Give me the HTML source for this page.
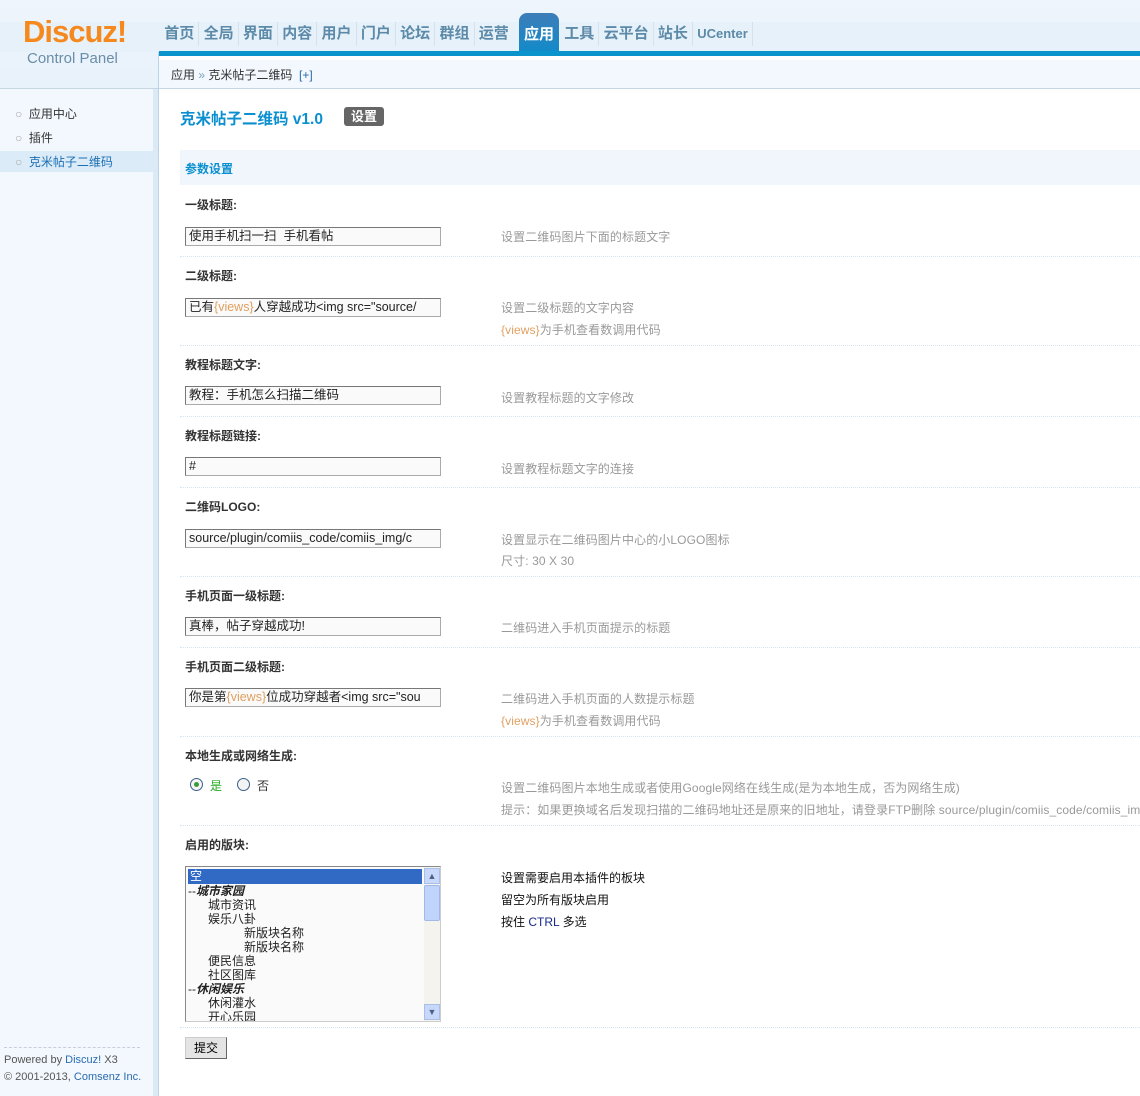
<!DOCTYPE html>
<html><head><meta charset="utf-8"><style>
*{margin:0;padding:0;box-sizing:border-box}
body{width:1140px;height:1096px;position:relative;overflow:hidden;background:#fff;font:12px "Liberation Sans","Noto Sans CJK SC",sans-serif;color:#333}
.a{position:absolute;white-space:nowrap}
#hd{position:absolute;left:0;top:0;width:1140px;height:88px;background:linear-gradient(#eef5fc,#e8f2fb)}
#side{position:absolute;left:0;top:89px;width:153px;height:1007px;background:#f2f8fd}
#strip{position:absolute;left:153px;top:89px;width:5px;height:1007px;background:#dceaf7}
#vl{position:absolute;left:158px;top:52px;width:1px;height:1044px;background:#bcd3e6}
.nav{position:absolute;top:22px;height:30px;font-size:15px;font-weight:bold;color:#5c8aa8;line-height:24px}
.nav span{display:inline-block;padding:0 4px 0 4.3px;border-right:1px solid #d4e2ee}
.lab{position:absolute;left:185px;font-weight:bold;color:#333;font-size:12px}
.inp{position:absolute;left:185px;width:256px;height:19px;border:1px solid #aaa;border-top-color:#777;border-left-color:#777;background:#fafafa;font-size:12.5px;line-height:17px;padding-left:3px;overflow:hidden;white-space:nowrap;color:#222}
.d{position:absolute;left:501px;color:#999;font-size:12px;white-space:nowrap;letter-spacing:0.1px}
.hr{position:absolute;left:180px;width:960px;border-top:1px dotted #d8e4ee}
.or{color:#e0a060}
</style></head><body>
<div id="hd"></div>
<div class="a" style="left:0;top:22px;width:1140px;height:30px;background:#e6f1fa"></div>
<div class="a" style="left:23px;top:14px;font:bold 31px 'Liberation Sans',sans-serif;color:#f5891e;letter-spacing:-1px">Discuz!</div>
<div class="a" style="left:27px;top:50px;font-size:15px;color:#6a8ea8">Control Panel</div>
<div class="nav" style="left:160px"><span>首页</span><span>全局</span><span>界面</span><span>内容</span><span>用户</span><span>门户</span><span>论坛</span><span>群组</span><span style="border:none">运营</span></div>
<div class="a" style="left:519px;top:13px;width:40px;height:43px;border-radius:8px 8px 0 0;background:linear-gradient(#3d7db8,#0e8ccb);color:#fff;font-size:15px;font-weight:bold;text-align:center;line-height:44px">应用</div>
<div class="nav" style="left:560px"><span>工具</span><span>云平台</span><span>站长</span><span style="font-size:13px">UCenter</span></div>
<div class="a" style="left:159px;top:51px;width:981px;height:5px;background:#0a94cb"></div>
<div class="a" style="left:159px;top:56px;width:981px;height:4px;background:#fff"></div>
<div class="a" style="left:159px;top:60px;width:981px;height:28px;background:#f2f8fd"></div>
<div class="a" style="left:0;top:88px;width:1140px;height:1px;background:#c6d7e4"></div>
<div class="a" style="left:171px;top:66px;color:#333">应用 <span style="color:#7a9fc0">»</span> 克米帖子二维码 &nbsp;<span style="color:#2a6bb0">[+]</span></div>
<div id="side"></div><div id="strip"></div><div id="vl"></div>
<div class="a" style="left:0;top:151px;width:153px;height:21px;background:#dcebf8"></div>
<div class="a" style="left:15px;top:102px;color:#333;line-height:24px"><span style="color:#aaa">○</span>&nbsp; 应用中心<br><span style="color:#aaa">○</span>&nbsp; 插件<br><span style="color:#aaa">○</span>&nbsp; <span style="color:#1a6fb3">克米帖子二维码</span></div>
<div class="a" style="left:4px;top:1047px;width:136px;border-top:1px dashed #ccd"></div>
<div class="a" style="left:4px;top:1052px;font-size:11px;line-height:17px;color:#555">Powered by <span style="color:#2a6bb0">Discuz!</span> X3<br>© 2001-2013, <span style="color:#2a6bb0">Comsenz Inc.</span></div>

<div class="a" style="left:180px;top:107px;font-size:15.5px;font-weight:bold;color:#0a8fd0">克米帖子二维码 v1.0</div>
<div class="a" style="left:344px;top:107px;width:40px;height:19px;border-radius:3px;background:#666;color:#fff;font-weight:bold;text-align:center;line-height:19px;font-size:13px">设置</div>
<div class="a" style="left:180px;top:150px;width:960px;height:35px;background:#f0f6fc"></div>
<div class="a" style="left:185px;top:160px;font-weight:bold;color:#0a8fd0">参数设置</div>

<div class="lab" style="top:196px">一级标题:</div>
<div class="inp" style="top:227px">使用手机扫一扫&nbsp; 手机看帖</div>
<div class="d" style="top:228px">设置二维码图片下面的标题文字</div>
<div class="hr" style="top:256px"></div>

<div class="lab" style="top:267px">二级标题:</div>
<div class="inp" style="top:298px">已有<span class="or">{views}</span>人穿越成功&lt;img src="source/</div>
<div class="d" style="top:299px">设置二级标题的文字内容</div>
<div class="d" style="top:321px"><span class="or">{views}</span>为手机查看数调用代码</div>
<div class="hr" style="top:345px"></div>

<div class="lab" style="top:356px">教程标题文字:</div>
<div class="inp" style="top:386px">教程：手机怎么扫描二维码</div>
<div class="d" style="top:389px">设置教程标题的文字修改</div>
<div class="hr" style="top:416px"></div>

<div class="lab" style="top:427px">教程标题链接:</div>
<div class="inp" style="top:457px">#</div>
<div class="d" style="top:460px">设置教程标题文字的连接</div>
<div class="hr" style="top:487px"></div>

<div class="lab" style="top:498px">二维码LOGO:</div>
<div class="inp" style="top:529px">source/plugin/comiis_code/comiis_img/c</div>
<div class="d" style="top:531px">设置显示在二维码图片中心的小LOGO图标</div>
<div class="d" style="top:552px">尺寸: 30 X 30</div>
<div class="hr" style="top:576px"></div>

<div class="lab" style="top:587px">手机页面一级标题:</div>
<div class="inp" style="top:617px">真棒，帖子穿越成功!</div>
<div class="d" style="top:619px">二维码进入手机页面提示的标题</div>
<div class="hr" style="top:647px"></div>

<div class="lab" style="top:658px">手机页面二级标题:</div>
<div class="inp" style="top:688px">你是第<span class="or">{views}</span>位成功穿越者&lt;img src="sou</div>
<div class="d" style="top:690px">二维码进入手机页面的人数提示标题</div>
<div class="d" style="top:712px"><span class="or">{views}</span>为手机查看数调用代码</div>
<div class="hr" style="top:736px"></div>

<div class="lab" style="top:747px">本地生成或网络生成:</div>
<div class="a" style="left:190px;top:778px;width:13px;height:13px;border:1px solid #3a5f8c;border-radius:50%;background:#f4f4f4"><div style="position:absolute;left:3px;top:3px;width:5px;height:5px;border-radius:50%;background:#3a9a3a"></div></div>
<div class="a" style="left:210px;top:777px;color:#22aa22">是</div>
<div class="a" style="left:237px;top:778px;width:13px;height:13px;border:1px solid #3a5f8c;border-radius:50%;background:#f4f4f4"></div>
<div class="a" style="left:257px;top:777px">否</div>
<div class="d" style="top:779px">设置二维码图片本地生成或者使用Google网络在线生成(是为本地生成，否为网络生成)</div>
<div class="d" style="top:801px">提示：如果更换域名后发现扫描的二维码地址还是原来的旧地址，请登录FTP删除 source/plugin/comiis_code/comiis_img/</div>
<div class="hr" style="top:825px"></div>

<div class="lab" style="top:836px">启用的版块:</div>
<div class="a" style="left:185px;top:866px;width:256px;height:156px;border:1px solid #888;border-right-color:#ccc;border-bottom-color:#ccc;background:#fafafa;overflow:hidden;line-height:14px;color:#222">
<div style="margin:2px 0 0 2px;width:234px;height:15px;background:#316ac5;color:#fff;padding-left:2px">空</div>
<div style="padding-left:2px">--<b><i>城市家园</i></b></div>
<div style="padding-left:22px">城市资讯</div><div style="padding-left:22px">娱乐八卦</div>
<div style="padding-left:58px">新版块名称</div><div style="padding-left:58px">新版块名称</div>
<div style="padding-left:22px">便民信息</div><div style="padding-left:22px">社区图库</div>
<div style="padding-left:2px">--<b><i>休闲娱乐</i></b></div>
<div style="padding-left:22px">休闲灌水</div><div style="padding-left:22px">开心乐园</div>
<div style="position:absolute;right:0;top:0;width:16px;height:154px;background:#f4f3ee">
<div style="height:16px;margin:1px 0;background:#c8d8fa;border:1px solid #a8bfe8;color:#4d6185;font-size:9px;text-align:center;line-height:14px">▲</div>
<div style="height:36px;background:#c0d4fb;border:1px solid #a0b8e8;border-radius:2px"></div>
<div style="position:absolute;bottom:1px;width:16px;height:16px;background:#c8d8fa;border:1px solid #a8bfe8;color:#4d6185;font-size:9px;text-align:center;line-height:14px">▼</div>
</div></div>
<div class="a" style="left:501px;top:867px;line-height:22px;color:#111">设置需要启用本插件的板块<br>留空为所有版块启用<br>按住 <span style="color:#1a2a8a">CTRL</span> 多选</div>
<div class="hr" style="top:1027px"></div>
<div class="a" style="left:185px;top:1037px;width:42px;height:22px;background:#e4e4e4;border:1px solid #ccc;border-right-color:#666;border-bottom-color:#666;text-align:center;line-height:20px;color:#000">提交</div>
</body></html>
